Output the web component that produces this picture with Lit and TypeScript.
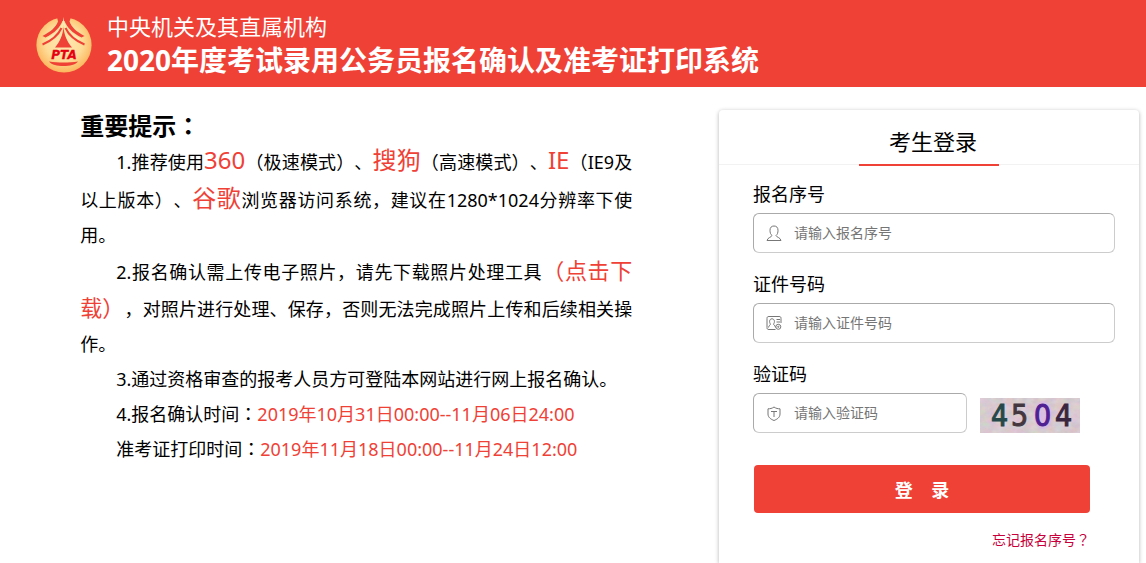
import { LitElement, html, css, svg } from "lit";
import { customElement } from "lit/decorators.js";

@customElement("app-logo")
class AppLogo extends LitElement {
  static styles = css`
    :host { display: block; flex: none; width: 56px; height: 56px; }
    svg { display: block; width: 100%; height: 100%; }
    .mark { font: italic bold 12px "DejaVu Sans", sans-serif; }
  `;
  render() {
    return html`<svg viewBox="0 0 56 56" aria-hidden="true">
      <defs>
        <radialGradient id="gold" cx="50%" cy="45%" r="55%">
          <stop offset="0" stop-color="#ffe9b4" />
          <stop offset=".6" stop-color="#fedc98" />
          <stop offset="1" stop-color="#fcb65c" />
        </radialGradient>
      </defs>
      <circle cx="28" cy="28" r="27.6" fill="url(#gold)" />
      <path d="M21 0H35L33.500 4.500C35.500 10 40 14.500 48.500 19L45.500 20.500C36 16 31 10 28.500 4H26.500C24 10 19 16 9.500 20.500L6.500 19C15 14.500 20 10 22 4.500Z" fill="#ef4136" />
      <path d="M27.500 0C27 9 22 15.500 11 21.500L13 23.500C22 19 26 12 27.500 7C29 12 33 19 42 23.500L44 21.500C33 15.500 28 9 27.500 0Z" fill="#ffe9b4" />
      <path d="M25.500 11C22 18.500 16 23.500 6.500 27.500M29.500 11C33 18.500 39 23.500 48.500 27.500" fill="none" stroke="#ef4136" stroke-width="2" />
      <path d="M27.500 10C26.800 18 24 24.500 19 30.500H36C31 24.500 28.200 18 27.500 10Z" fill="#ef4136" />
      <path d="M13 44.500C22 45.800 33 45.800 42 44.500C39 48 34 49 27.500 49C21 49 16 48 13 44.500Z" fill="#ef4136" />
      <text class="mark" x="28" y="42" text-anchor="middle" fill="#e60012" stroke="#e60012" stroke-width=".3">PTA</text>
    </svg>`;
  }
}

@customElement("captcha-image")
class CaptchaImage extends LitElement {
  static styles = css`
    :host { display: block; flex: none; width: 100px; height: 35px; }
    svg { display: block; width: 100%; height: 100%; }
    .digit { font: 30px "DejaVu Sans Condensed", "DejaVu Sans", sans-serif; stroke-width: 1; }
  `;
  render() {
    return html`<svg viewBox="0 0 100 35" role="img" aria-label="验证码图片">
      <defs>
        <filter id="grain" x="0" y="0" width="100%" height="100%">
          <feTurbulence type="fractalNoise" baseFrequency=".12 .16" numOctaves="3" seed="4" />
          <feColorMatrix values=".5 0 0 0 .52  0 .45 0 0 .47  0 0 .5 0 .48  0 0 0 0 1" />
        </filter>
      </defs>
      <rect width="100" height="35" fill="#cdbbc2" />
      <rect width="100" height="35" filter="url(#grain)" opacity=".5" />
      <ellipse cx="63" cy="17" rx="9" ry="14" fill="#d9b5ee" opacity=".55" />
      ${[
        { x: 11, d: "4", c: "#27484a" },
        { x: 31, d: "5", c: "#443740" },
        { x: 54, d: "0", c: "#4f2191" },
        { x: 75, d: "4", c: "#3a2540" },
      ].map((g) => svg`<text class="digit" x=${g.x} y="28" fill=${g.c} stroke=${g.c}>${g.d}</text>`)}
    </svg>`;
  }
}

const userIcon = svg`<path d="M6 10.500C4.500 9.500 4 7.500 4 5.300C4 2.500 5.500 1 8 1S12 2.500 12 5.300C12 7.500 11.500 9.500 10 10.500C10 12 14.500 12.500 15 15.500H1C1.500 12.500 6 12 6 10.500Z" />`;
const cardIcon = svg`<path d="M9.500 14.500H3C1.500 14.500 1 14 1 12.500V3.500C1 2 1.500 1.500 3 1.500H13C14.500 1.500 15 2 15 3.500V8M2.500 12.500C3 10 4.500 10.200 4.500 9C3 7.500 3.200 3.800 6 3.800S9 7.500 7.500 9C7.500 10.200 9 10 9.500 12.500M10.500 4.500H14M10.500 7H14" /><circle cx="12.300" cy="11.800" r="2.500" /><circle cx="12.300" cy="11.800" r=".6" />`;
const shieldIcon = svg`<path d="M8 2C6 3.500 4 3.800 2 3.800V9C2 12.500 5 14.300 8 15.500C11 14.300 14 12.500 14 9V3.800C12 3.800 10 3.500 8 2ZM5 6.500H11M8 6.500V12" />`;

@customElement("app-root")
class AppRoot extends LitElement {
  static styles = css`
    :host {
      display: flex;
      flex-direction: column;
      min-height: 100vh;
      background: #fff;
      color: #000;
      font-family: "Noto Sans", "Noto Sans CJK SC", sans-serif;
      font-size: 18px;
      text-spacing-trim: space-all;
    }
    * { box-sizing: border-box; }
    h1, h2, p { margin: 0; }
    header {
      display: flex;
      align-items: center;
      gap: 15px;
      padding: 9px 36px 10px;
      background: #ef4136;
      color: #fff;
    }
    app-logo { margin-top: 4px; }
    .org { font-size: 22px; line-height: 34px; }
    .system { font-size: 28px; line-height: 34px; font-weight: bold; }
    main {
      flex: 1;
      display: flex;
      justify-content: space-between;
      padding: 23px 7px 0 7%;
    }
    .notice { width: 552px; flex: 0 1 auto; line-height: 35px; }
    .notice h2 { font-size: 24px; line-height: 32px; }
    .notice p { text-indent: 36px; text-align: justify; }
    .mid { font-family: "Noto Sans CJK TC", sans-serif; line-height: 1; }
    .red { color: #ef4136; }
    .browser { color: #ef4136; font-size: 24px; }
    .download { color: #ef4136; font-size: 22px; text-decoration: none; }
    .card {
      flex: none;
      width: 420px;
      border-radius: 4px 4px 0 0;
      box-shadow: 0 1px 4px rgba(0, 0, 0, 0.3);
    }
    .tabs {
      display: flex;
      justify-content: center;
      height: 55px;
      border-bottom: 1px solid #f2f2f2;
    }
    .tab {
      width: 140px;
      height: 56px;
      padding-left: 8px;
      border-bottom: 2px solid #ef4136;
      font-size: 22px;
      font-weight: normal;
      line-height: 62px;
      text-align: center;
    }
    form { padding: 14px 24px 0 34px; }
    label { display: block; line-height: 30px; }
    .row { display: flex; align-items: center; gap: 13px; margin: 4px 0 16px; }
    captcha-image { margin-top: 4px; }
    .field { position: relative; flex: 1; }
    .field svg {
      position: absolute;
      left: 13px;
      top: 12px;
      width: 16px;
      height: 16px;
      fill: none;
      stroke: #777;
      stroke-width: 1;
    }
    input {
      display: block;
      width: 100%;
      height: 40px;
      padding: 0 12px 2px 40px;
      border: 1px solid #ccc;
      border-color: #aaa #ccc #ccc #aaa;
      border-radius: 6px;
      background: #fff;
      color: #000;
      font: inherit;
      font-size: 14px;
    }
    input::placeholder { color: #757575; }
    .short { flex: none; width: 214px; }
    .actions { padding: 16px 25px 0 1px; }
    button {
      display: block;
      width: 100%;
      height: 48px;
      padding: 0;
      border: 0;
      border-radius: 4px;
      background: #ef4136;
      color: #fff;
      font: inherit;
      font-weight: bold;
      white-space: pre;
    }
    .forgot {
      display: block;
      padding-top: 17px;
      color: #c7003b;
      font-size: 14px;
      line-height: 20px;
      text-align: right;
      text-decoration: none;
    }
  `;

  field(id: string, hint: string, icon: unknown, size = "") {
    return html`<div class="field ${size}">
      <input id=${id} type="text" placeholder=${hint} />
      <svg viewBox="0 0 16 16" aria-hidden="true">${icon}</svg>
    </div>`;
  }

  render() {
    return html`
      <header>
        <app-logo></app-logo>
        <div>
          <p class="org">中央机关及其直属机构</p>
          <h1 class="system">2020年度考试录用公务员报名确认及准考证打印系统</h1>
        </div>
      </header>
      <main>
        <section class="notice">
          <h2>重要提示<span class="mid" lang="zh-TW">：</span></h2>
          <p>1.推荐使用<span class="browser">360</span>（极速模式）、<span class="browser">搜狗</span>（高速模式）、<span class="browser">IE</span>（IE9及以上版本）、<span class="browser">谷歌</span>浏览器访问系统，建议在1280*1024分辨率下使用。</p>
          <p>2.报名确认需上传电子照片，请先下载照片处理工具<a class="download" href="#">（点击下载）</a>，对照片进行处理、保存，否则无法完成照片上传和后续相关操作。</p>
          <p>3.通过资格审查的报考人员方可登陆本网站进行网上报名确认。</p>
          <p>4.报名确认时间<span class="mid" lang="zh-TW">：</span><span class="red">2019年10月31日00:00--11月06日24:00</span></p>
          <p>准考证打印时间<span class="mid" lang="zh-TW">：</span><span class="red">2019年11月18日00:00--11月24日12:00</span></p>
        </section>
        <section class="card">
          <div class="tabs"><h2 class="tab">考生登录</h2></div>
          <form>
            <label for="serial">报名序号</label>
            <div class="row">${this.field("serial", "请输入报名序号", userIcon)}</div>
            <label for="idcard">证件号码</label>
            <div class="row">${this.field("idcard", "请输入证件号码", cardIcon)}</div>
            <label for="code">验证码</label>
            <div class="row">
              ${this.field("code", "请输入验证码", shieldIcon, "short")}
              <captcha-image></captcha-image>
            </div>
            <div class="actions">
              <button type="button">登    录</button>
              <a class="forgot" href="#">忘记报名序号<span class="mid" lang="zh-TW">？</span></a>
            </div>
          </form>
        </section>
      </main>
    `;
  }
}
